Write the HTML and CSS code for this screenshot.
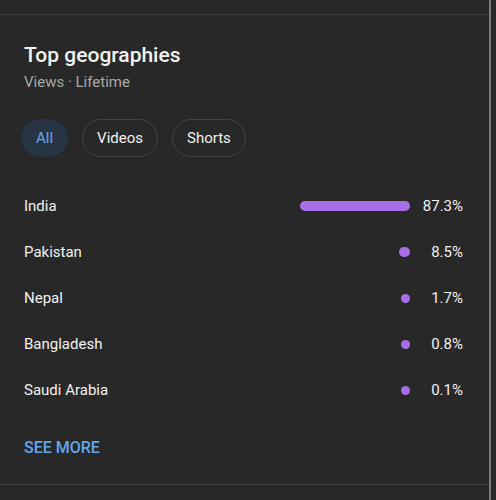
FILE: index.html
```html
<!DOCTYPE html>
<html>
<head>
<meta charset="utf-8">
<link rel="stylesheet" href="styles.css">
</head>
<body>
<div class="frame">
  <div class="page">
    <div class="top-gap"></div>
    <section class="card">
      <h2 class="title">Top geographies</h2>
      <div class="subtitle">Views · Lifetime</div>
      <div class="chips">
        <span class="chip active">All</span>
        <span class="chip">Videos</span>
        <span class="chip">Shorts</span>
      </div>
      <div class="rows">
        <div class="row"><span class="name">India</span><span class="bar-area"><span class="bar" style="width:110px"></span></span><span class="pct">87.3%</span></div>
        <div class="row"><span class="name">Pakistan</span><span class="bar-area"><span class="bar" style="width:11px"></span></span><span class="pct">8.5%</span></div>
        <div class="row"><span class="name">Nepal</span><span class="bar-area"><span class="bar dot"></span></span><span class="pct">1.7%</span></div>
        <div class="row"><span class="name">Bangladesh</span><span class="bar-area"><span class="bar dot"></span></span><span class="pct">0.8%</span></div>
        <div class="row"><span class="name">Saudi Arabia</span><span class="bar-area"><span class="bar dot"></span></span><span class="pct">0.1%</span></div>
      </div>
      <div class="see-more">SEE MORE</div>
    </section>
    <div class="bottom-gap"></div>
  </div>
  <div class="scroll-line"></div>
</div>
</body>
</html>
```
FILE: styles.css
```css
html, body {
  margin: 0;
  padding: 0;
  background: #282828;
  font-family: Roboto, "Noto Sans", sans-serif;
  color: #f1f1f1;
}
.frame {
  display: flex;
  width: 496px;
  height: 500px;
  overflow: hidden;
}
.page {
  width: 489px;
  flex: none;
}
.scroll-line {
  width: 2px;
  flex: none;
  background: #7c7c7c;
}
.top-gap {
  height: 14px;
  border-bottom: 1px solid #3c3c3c;
}
.card {
  padding: 26px 26px 26px 24px;
  border-bottom: 1px solid #3c3c3c;
}
.title {
  margin: 0;
  font-size: 21px;
  line-height: 28px;
  font-weight: 500;
  color: #f4f4f4;
}
.subtitle {
  margin-top: 3px;
  font-size: 15px;
  line-height: 20px;
  color: #a8a8a8;
}
.chips {
  display: flex;
  gap: 14px;
  margin-top: 27px;
  margin-left: -3px;
}
.chip {
  box-sizing: border-box;
  height: 38px;
  padding: 0 14px;
  border: 1px solid #444444;
  border-radius: 19px;
  display: flex;
  align-items: center;
  font-size: 15px;
  color: #f1f1f1;
}
.chip.active {
  background: #263444;
  border-color: #263444;
  color: #6aa4e4;
}
.rows {
  margin-top: 26px;
}
.row {
  display: flex;
  align-items: center;
  height: 46px;
  font-size: 15px;
  line-height: 20px;
}
.name {
  flex: none;
  width: 180px;
}
.bar-area {
  flex: 1;
  display: flex;
  justify-content: flex-end;
}
.bar {
  height: 10px;
  border-radius: 5px;
  background: #a86ee8;
}
.bar.dot {
  width: 9px;
  height: 9px;
}
.pct {
  flex: none;
  width: 53px;
  text-align: right;
}
.see-more {
  margin-top: 25px;
  font-size: 16px;
  line-height: 20px;
  font-weight: 500;
  color: #62a6ec;
}
.bottom-gap {
  height: 20px;
}
```
